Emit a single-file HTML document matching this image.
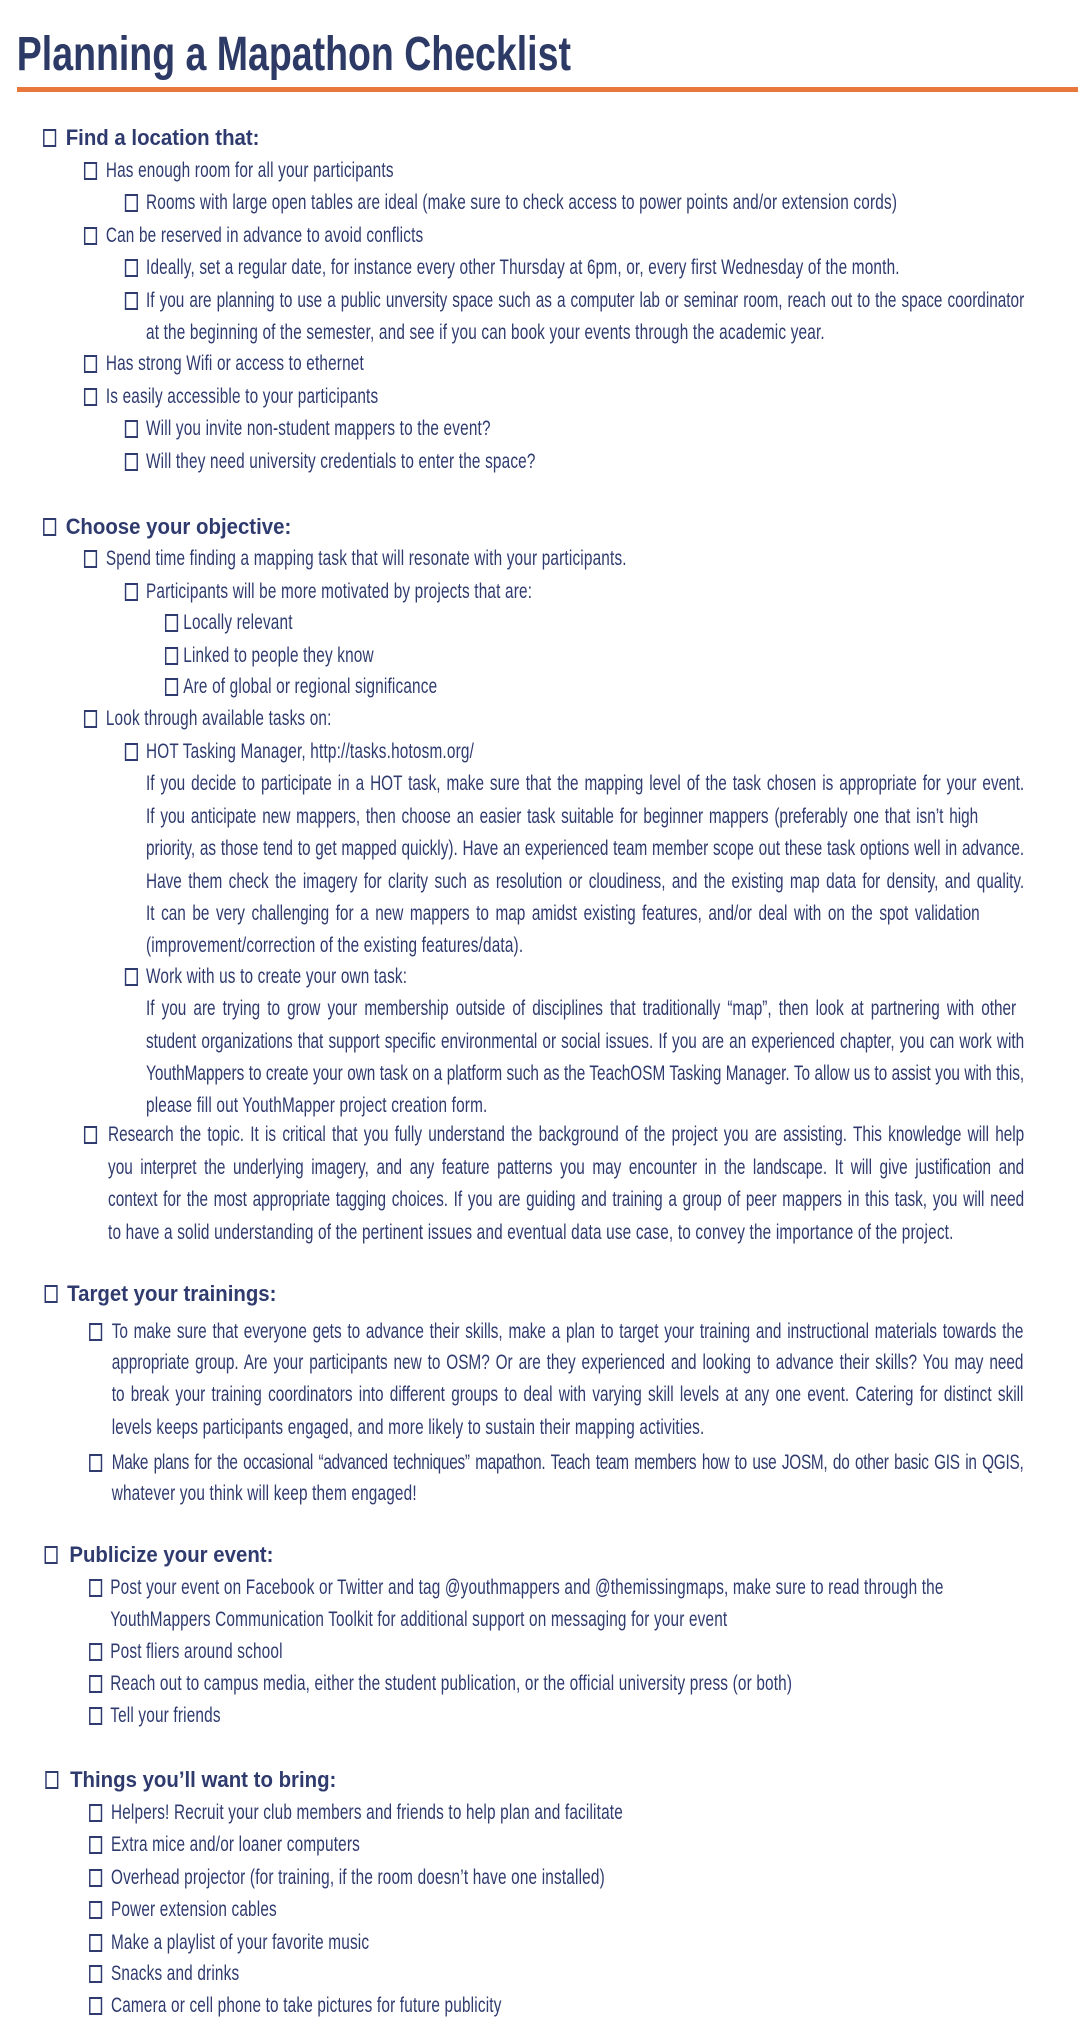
<!DOCTYPE html>
<html><head><meta charset="utf-8"><style>
html,body{margin:0;padding:0;background:#fff;}
body{width:1080px;height:2042px;position:relative;overflow:hidden;}
#w{position:absolute;left:0;top:0;width:1479px;height:2042px;transform:scaleX(0.73);transform-origin:0 0;font-family:"Liberation Sans",sans-serif;color:#2f3b6e;}
.t{position:absolute;left:23px;top:30px;font-size:48px;line-height:50px;font-weight:bold;color:#2d3a66;white-space:nowrap;transform:scaleX(1.07);transform-origin:0 0;}
.l{position:absolute;white-space:nowrap;font-size:21px;line-height:32px;letter-spacing:0.25px;}
.h{font-weight:bold;font-size:22px;letter-spacing:0;}
.h span{display:inline-block;transform:scaleX(1.27);transform-origin:0 0;}
.j{white-space:normal;text-align:justify;text-align-last:justify;letter-spacing:0;}
.l i{position:absolute;top:7px;width:14px;height:14px;border:2px solid #2f3b6e;}
#bar{position:absolute;left:17px;top:87px;width:1061px;height:5px;background:#e8773c;}
</style></head><body>
<div id="bar"></div>
<div id="w">
<div class="t">Planning a Mapathon Checklist</div>

<div class="l h" style="top:122px;left:90px"><i style="left:-31px"></i><span>Find a location that:</span></div>
<div class="l" style="top:155px;left:145px"><i style="left:-30px"></i>Has enough room for all your participants</div>
<div class="l" style="top:187px;left:200px"><i style="left:-29px"></i>Rooms with large open tables are ideal (make sure to check access to power points and/or extension cords)</div>
<div class="l" style="top:220px;left:145px"><i style="left:-30px"></i>Can be reserved in advance to avoid conflicts</div>
<div class="l" style="top:252px;left:200px"><i style="left:-29px"></i>Ideally, set a regular date, for instance every other Thursday at 6pm, or, every first Wednesday of the month.</div>
<div class="l j" style="top:285px;left:200px;width:1203px"><i style="left:-29px"></i>If you are planning to use a public unversity space such as a computer lab or seminar room, reach out to the space coordinator</div>
<div class="l" style="top:317px;left:200px">at the beginning of the semester, and see if you can book your events through the academic year.</div>
<div class="l" style="top:348px;left:145px"><i style="left:-30px"></i>Has strong Wifi or access to ethernet</div>
<div class="l" style="top:381px;left:145px"><i style="left:-30px"></i>Is easily accessible to your participants</div>
<div class="l" style="top:413px;left:200px"><i style="left:-29px"></i>Will you invite non-student mappers to the event?</div>
<div class="l" style="top:446px;left:200px"><i style="left:-29px"></i>Will they need university credentials to enter the space?</div>

<div class="l h" style="top:511px;left:90px"><i style="left:-31px"></i><span>Choose your objective:</span></div>
<div class="l" style="top:543px;left:145px"><i style="left:-30px"></i>Spend time finding a mapping task that will resonate with your participants.</div>
<div class="l" style="top:576px;left:200px"><i style="left:-29px"></i>Participants will be more motivated by projects that are:</div>
<div class="l" style="top:607px;left:251px"><i style="left:-25px"></i>Locally relevant</div>
<div class="l" style="top:640px;left:251px"><i style="left:-25px"></i>Linked to people they know</div>
<div class="l" style="top:671px;left:251px"><i style="left:-25px"></i>Are of global or regional significance</div>
<div class="l" style="top:703px;left:145px"><i style="left:-30px"></i>Look through available tasks on:</div>
<div class="l" style="top:736px;left:200px"><i style="left:-29px"></i>HOT Tasking Manager, http://tasks.hotosm.org/</div>
<div class="l j" style="top:768px;left:200px;width:1203px">If you decide to participate in a HOT task, make sure that the mapping level of the task chosen is appropriate for your event.</div>
<div class="l j" style="top:801px;left:200px;width:1140px">If you anticipate new mappers, then choose an easier task suitable for beginner mappers (preferably one that isn’t high</div>
<div class="l j" style="top:833px;left:200px;width:1203px">priority, as those tend to get mapped quickly). Have an experienced team member scope out these task options well in advance.</div>
<div class="l j" style="top:866px;left:200px;width:1203px">Have them check the imagery for clarity such as resolution or cloudiness, and the existing map data for density, and quality.</div>
<div class="l j" style="top:898px;left:200px;width:1142px">It can be very challenging for a new mappers to map amidst existing features, and/or deal with on the spot validation</div>
<div class="l" style="top:930px;left:200px">(improvement/correction of the existing features/data).</div>
<div class="l" style="top:961px;left:200px"><i style="left:-29px"></i>Work with us to create your own task:</div>
<div class="l j" style="top:993px;left:200px;width:1192px">If you are trying to grow your membership outside of disciplines that traditionally “map”, then look at partnering with other</div>
<div class="l j" style="top:1026px;left:200px;width:1203px">student organizations that support specific environmental or social issues. If you are an experienced chapter, you can work with</div>
<div class="l j" style="top:1058px;left:200px;width:1203px">YouthMappers to create your own task on a platform such as the TeachOSM Tasking Manager. To allow us to assist you with this,</div>
<div class="l" style="top:1090px;left:200px">please fill out YouthMapper project creation form.</div>
<div class="l j" style="top:1119px;left:148px;width:1255px"><i style="left:-33px"></i>Research the topic. It is critical that you fully understand the background of the project you are assisting. This knowledge will help</div>
<div class="l j" style="top:1152px;left:148px;width:1255px">you interpret the underlying imagery, and any feature patterns you may encounter in the landscape. It will give justification and</div>
<div class="l j" style="top:1184px;left:148px;width:1255px">context for the most appropriate tagging choices. If you are guiding and training a group of peer mappers in this task, you will need</div>
<div class="l" style="top:1217px;left:148px">to have a solid understanding of the pertinent issues and eventual data use case, to convey the importance of the project.</div>

<div class="l h" style="top:1278px;left:92px"><i style="left:-31px"></i><span>Target your trainings:</span></div>
<div class="l j" style="top:1316px;left:153px;width:1249px"><i style="left:-31px"></i>To make sure that everyone gets to advance their skills, make a plan to target your training and instructional materials towards the</div>
<div class="l j" style="top:1347px;left:153px;width:1249px">appropriate group. Are your participants new to OSM? Or are they experienced and looking to advance their skills? You may need</div>
<div class="l j" style="top:1379px;left:153px;width:1249px">to break your training coordinators into different groups to deal with varying skill levels at any one event. Catering for distinct skill</div>
<div class="l" style="top:1412px;left:153px">levels keeps participants engaged, and more likely to sustain their mapping activities.</div>
<div class="l j" style="top:1447px;left:153px;width:1249px;white-space:nowrap;letter-spacing:-0.35px"><i style="left:-31px"></i>Make plans for the occasional “advanced techniques” mapathon. Teach team members how to use JOSM, do other basic GIS in QGIS,</div>
<div class="l" style="top:1478px;left:153px">whatever you think will keep them engaged!</div>

<div class="l h" style="top:1539px;left:95px"><i style="left:-34px"></i><span>Publicize your event:</span></div>
<div class="l" style="top:1572px;left:151px"><i style="left:-29px"></i>Post your event on Facebook or Twitter and tag @youthmappers and @themissingmaps, make sure to read through the</div>
<div class="l" style="top:1604px;left:151px">YouthMappers Communication Toolkit for additional support on messaging for your event</div>
<div class="l" style="top:1636px;left:151px"><i style="left:-29px"></i>Post fliers around school</div>
<div class="l" style="top:1668px;left:151px"><i style="left:-29px"></i>Reach out to campus media, either the student publication, or the official university press (or both)</div>
<div class="l" style="top:1700px;left:151px"><i style="left:-29px"></i>Tell your friends</div>

<div class="l h" style="top:1764px;left:96px"><i style="left:-34px"></i><span>Things you’ll want to bring:</span></div>
<div class="l" style="top:1797px;left:152px"><i style="left:-30px"></i>Helpers! Recruit your club members and friends to help plan and facilitate</div>
<div class="l" style="top:1829px;left:152px"><i style="left:-30px"></i>Extra mice and/or loaner computers</div>
<div class="l" style="top:1862px;left:152px"><i style="left:-30px"></i>Overhead projector (for training, if the room doesn’t have one installed)</div>
<div class="l" style="top:1894px;left:152px"><i style="left:-30px"></i>Power extension cables</div>
<div class="l" style="top:1927px;left:152px"><i style="left:-30px"></i>Make a playlist of your favorite music</div>
<div class="l" style="top:1958px;left:152px"><i style="left:-30px"></i>Snacks and drinks</div>
<div class="l" style="top:1990px;left:152px"><i style="left:-30px"></i>Camera or cell phone to take pictures for future publicity</div>
</div>
</body></html>
